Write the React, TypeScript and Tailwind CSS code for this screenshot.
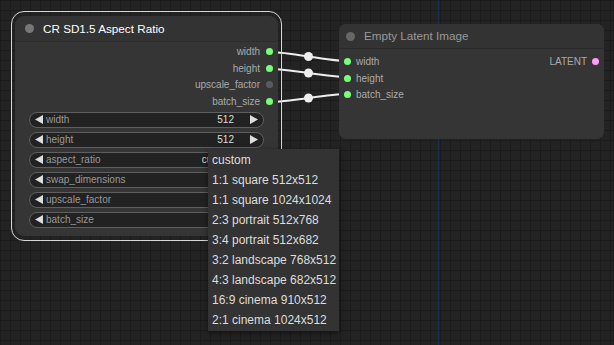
import React from "react";

const outputs = [
  { name: "width", color: "bg-[#7f7]" },
  { name: "height", color: "bg-[#7f7]" },
  { name: "upscale_factor", color: "bg-[#5a5a66]" },
  { name: "batch_size", color: "bg-[#7f7]" },
];

// values of the widgets under the open menu are hidden in the shot
const widgets = [
  { name: "width", value: "512" },
  { name: "height", value: "512" },
  { name: "aspect_ratio", value: "custom" },
  { name: "swap_dimensions", value: "" },
  { name: "upscale_factor", value: "" },
  { name: "batch_size", value: "" },
];

const menuItems = [
  "custom",
  "1:1 square 512x512",
  "1:1 square 1024x1024",
  "2:3 portrait 512x768",
  "3:4 portrait 512x682",
  "3:2 landscape 768x512",
  "4:3 landscape 682x512",
  "16:9 cinema 910x512",
  "2:1 cinema 1024x512",
];

const links = [
  [52, 61],
  [69, 77],
  [102, 94],
];

const Arrow = ({ dir }: { dir: "left" | "right" }) => (
  <svg width="8" height="9" viewBox="0 0 8 9" className="shrink-0">
    <polygon points={dir === "left" ? "8,0 8,9 0,4.5" : "0,0 0,9 8,4.5"} fill="#ddd" />
  </svg>
);

export default function App() {
  return (
    <div className="relative w-[614px] h-[345px] overflow-hidden bg-[#232323] bg-[linear-gradient(#1b1b1b_1px,transparent_1px),linear-gradient(90deg,#1b1b1b_1px,transparent_1px)] bg-size-[10px_10px] font-['Liberation_Sans',Arial,sans-serif]">
      {/* canvas axis */}
      <div className="absolute left-[438px] top-0 h-full w-px bg-[#1c2d4d]" />

      {/* links */}
      <svg className="absolute inset-0" width="614" height="345">
        {links.map(([a, b], i) => {
          const mx = 308.5;
          const my = (a + b) / 2;
          return (
            <g key={i}>
              <path
                d={`M270 ${a} C289 ${a}, 328 ${b}, 347 ${b}`}
                stroke="#eee"
                strokeWidth="2.2"
                fill="none"
              />
              <circle cx={mx} cy={my} r="4.5" fill="#eee" />
            </g>
          );
        })}
      </svg>

      {/* selection outline */}
      <div className="absolute left-[11px] top-[11px] w-[271px] h-[230px] rounded-[13px] border border-[#d8d8d8]" />

      {/* CR SD1.5 Aspect Ratio */}
      <div className="absolute left-[15px] top-[16px] w-[263px] h-[220px] rounded-[9px] bg-[#353535] flex flex-col overflow-hidden">
        <div className="h-[26px] shrink-0 bg-[#333] border-b border-[#2c2c2c] flex items-center pl-[10px]">
          <div className="w-[9px] h-[9px] rounded-full bg-[#777]" />
          <span className="ml-[9px] text-[11.7px] text-white">CR SD1.5 Aspect Ratio</span>
        </div>
        <div className="flex flex-col items-end pr-[5px] pt-[1px]">
          {outputs.map((o) => (
            <div key={o.name} className="h-[16.7px] flex items-center gap-[6px]">
              <span className="text-[10px] text-[#aaa]">{o.name}</span>
              <div className={`w-[7px] h-[7px] rounded-full ${o.color}`} />
            </div>
          ))}
        </div>
        <div className="flex flex-col gap-[4px] px-[14px] mt-[2px]">
          {widgets.map((w) => (
            <div
              key={w.name}
              className="h-[16px] rounded-full bg-[#222] border border-[#5f5f5f] flex items-center pl-[5px] pr-[5px]"
            >
              <Arrow dir="left" />
              <span className="ml-[3px] text-[10px] text-[#999]">{w.name}</span>
              <span className="ml-auto text-[10px] text-[#ddd]">{w.value}</span>
              <div className="ml-[16px]">
                <Arrow dir="right" />
              </div>
            </div>
          ))}
        </div>
      </div>

      {/* Empty Latent Image */}
      <div className="absolute left-[339px] top-[24px] w-[265px] h-[115px] rounded-[7px] bg-[#353535] flex flex-col overflow-hidden">
        <div className="h-[25px] shrink-0 bg-[#333] border-b border-[#2c2c2c] flex items-center pl-[7px]">
          <div className="w-[9px] h-[9px] rounded-full bg-[#666]" />
          <span className="ml-[9px] text-[11.7px] text-[#999]">Empty Latent Image</span>
        </div>
        <div className="flex pt-[4px] pl-[5px] pr-[5px]">
          <div className="flex flex-col">
            {["width", "height", "batch_size"].map((n) => (
              <div key={n} className="h-[16.7px] flex items-center gap-[5px]">
                <div className="w-[7px] h-[7px] rounded-full bg-[#7f7]" />
                <span className="text-[10px] text-[#aaa]">{n}</span>
              </div>
            ))}
          </div>
          <div className="ml-auto h-[16.7px] flex items-center gap-[5px]">
            <span className="text-[10px] text-[#aaa]">LATENT</span>
            <div className="w-[7px] h-[7px] rounded-full bg-[#ff9cf9]" />
          </div>
        </div>
      </div>

      {/* combo menu */}
      <div className="absolute left-[208px] top-[149px] w-[131px] bg-[#333] shadow-[0_2px_6px_rgba(0,0,0,0.5)] py-[1px]">
        {menuItems.map((m) => (
          <div key={m} className="h-[20px] flex items-center pl-[4px] text-[12px] text-[#ddd] whitespace-nowrap">
            {m}
          </div>
        ))}
      </div>
    </div>
  );
}
